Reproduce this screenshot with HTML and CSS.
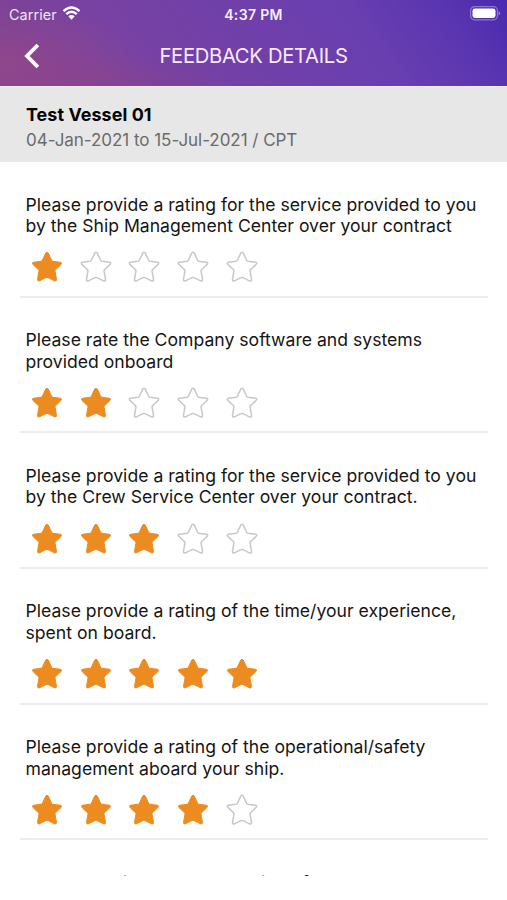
FILE: index.html
```html
<!DOCTYPE html>
<html lang="en">
<head>
<meta charset="utf-8">
<title>Feedback Details</title>
<link rel="stylesheet" href="styles.css">
</head>
<body>
<svg class="defs" aria-hidden="true"><symbol id="star" viewBox="0 0 32 32"><path d="M14.7 2.1Q16 .2 17.3 2.1L20.6 9.2Q21 10.1 22 10.3L29.6 11.3Q31.4 11.8 30.2 13.3L24.5 18.8Q23.9 19.5 24.1 20.4L25.5 28.4Q25.5 30.5 23.5 29.8L17 26.6Q16 26.2 15 26.6L8.5 29.8Q6.5 30.5 6.5 28.4L7.9 20.4Q8.1 19.5 7.5 18.8L1.8 13.3Q.6 11.8 2.4 11.3L10 10.3Q11 10.1 11.4 9.2Z"/></symbol></svg>
<header class="header">
  <div class="status">
    <div class="carrier"><span class="carrier-name">Carrier</span>
      <svg class="wifi" viewBox="0 0 19 14"><path d="M1.5 5.2Q9.5-2 17.5 5.2M4.3 8.2Q9.5 3.5 14.7 8.2" fill="none" stroke="#fff" stroke-width="2.4"/><path d="M6.3 10.3Q9.5 7.8 12.7 10.3L9.5 13.7Z" fill="#fff"/></svg>
    </div>
    <span class="time">4:37 PM</span>
    <svg class="battery" viewBox="0 0 31 15"><rect x=".6" y=".6" width="26.8" height="13.2" rx="4" fill="none" stroke="#fff" stroke-opacity=".35" stroke-width="1.2"/><rect x="2.5" y="2.5" width="23" height="9.4" rx="2.3" fill="#fff"/><path d="M28.6 5Q31.4 7.2 28.6 9.5Z" fill="#fff" opacity=".45"/></svg>
  </div>
  <nav class="nav">
    <svg class="back" viewBox="0 0 16 26"><path d="M13.8 2L3 13L13.8 24" fill="none" stroke="#fff" stroke-width="3.8"/></svg>
    <h1 class="title">FEEDBACK DETAILS</h1>
  </nav>
</header>
<section class="vessel">
  <h2 class="vessel-name">Test Vessel 01</h2>
  <p class="vessel-dates">04-Jan-2021 to 15-Jul-2021 / CPT</p>
</section>
<main class="list">
  <article class="item"><p class="question">Please provide a rating for the service provided to you<br>by the Ship Management Center over your contract</p>
    <div class="stars"><svg class="star on"><use href="#star"/></svg><svg class="star"><use href="#star"/></svg><svg class="star"><use href="#star"/></svg><svg class="star"><use href="#star"/></svg><svg class="star"><use href="#star"/></svg></div></article>
  <article class="item"><p class="question">Please rate the Company software and systems<br>provided onboard</p>
    <div class="stars"><svg class="star on"><use href="#star"/></svg><svg class="star on"><use href="#star"/></svg><svg class="star"><use href="#star"/></svg><svg class="star"><use href="#star"/></svg><svg class="star"><use href="#star"/></svg></div></article>
  <article class="item"><p class="question">Please provide a rating for the service provided to you<br>by the Crew Service Center over your contract.</p>
    <div class="stars"><svg class="star on"><use href="#star"/></svg><svg class="star on"><use href="#star"/></svg><svg class="star on"><use href="#star"/></svg><svg class="star"><use href="#star"/></svg><svg class="star"><use href="#star"/></svg></div></article>
  <article class="item"><p class="question">Please provide a rating of the time/your experience,<br>spent on board.</p>
    <div class="stars"><svg class="star on"><use href="#star"/></svg><svg class="star on"><use href="#star"/></svg><svg class="star on"><use href="#star"/></svg><svg class="star on"><use href="#star"/></svg><svg class="star on"><use href="#star"/></svg></div></article>
  <article class="item"><p class="question">Please provide a rating of the operational/safety<br>management aboard your ship.</p>
    <div class="stars"><svg class="star on"><use href="#star"/></svg><svg class="star on"><use href="#star"/></svg><svg class="star on"><use href="#star"/></svg><svg class="star on"><use href="#star"/></svg><svg class="star"><use href="#star"/></svg></div></article>
  <article class="item"><p class="question">Please provide an overall rating of your travel</p></article>
</main>
</body>
</html>
```
FILE: styles.css
```css
* { box-sizing: border-box; }
body { margin: 0; height: 900px; overflow: hidden; background: #fff; font-family: Inter, "Liberation Sans", sans-serif; color: #151515; }
h1, h2, p { margin: 0; font-weight: 400; }
.defs { position: absolute; width: 0; height: 0; }
.header { height: 86px; color: #fff; background: radial-gradient(ellipse 150px 60px at 0 62px, #95488bbb 0, #95488b00 100%), radial-gradient(ellipse 170px 35px at 70px 88px, #8b438abb 0, #8b438a00 100%), linear-gradient(55deg, #80428f 0%, #7842a2 25%, #7040aa 50%, #683eb0 72%, #5a35b1 88%, #4929ae 100%); }
.status { height: 28px; display: grid; grid-template-columns: 1fr auto 1fr; align-items: center; padding: 0 6px 0 9px; }
.carrier { display: flex; align-items: center; gap: 5px; }
.carrier-name { font-size: 14.4px; letter-spacing: .1px; color: #f0e3f4; }
.wifi { width: 19px; height: 14px; margin-top: -2px; }
.time { font-size: 14px; font-weight: 600; letter-spacing: .35px; margin-left: -3px; color: #f7edff; }
.battery { width: 31px; height: 15px; justify-self: end; margin-top: -1px; }
.nav { height: 56px; display: grid; grid-template-columns: 40px 1fr 40px; align-items: center; }
.back { width: 16px; height: 26px; margin-left: 24px; }
.title { text-align: center; font-size: 20.2px; letter-spacing: -.3px; padding-bottom: 1px; color: #f9eaff; }
.vessel { height: 76px; padding: 17px 26px 0; background: #e7e7e7; border-top: 1px solid #efedf1; }
.vessel-name { font-size: 17.9px; line-height: 22px; font-weight: 700; letter-spacing: .08px; color: #050505; }
.vessel-dates { margin-top: 2px; font-size: 17px; line-height: 24px; letter-spacing: -.04px; color: #6b6b6b; }
.list { height: 714px; overflow: hidden; padding: .3px 19px 0 20px; }
.item { height: 135.6px; padding: 31.3px 0 0 5.5px; border-bottom: 2px solid #ededed; }
.question { font-size: 17.6px; line-height: 21.6px; letter-spacing: .01px; white-space: nowrap; }
.item:last-child .question { padding-top: .9px; }
.stars { display: flex; gap: 16.85px; margin: 14.7px 0 0 5.2px; }
.star { width: 32px; height: 32px; fill: #fff; stroke: #c7c7c7; stroke-width: 1.5; }
.star.on { fill: #ec8b20; stroke: #ec8b20; stroke-width: 1; }
```
